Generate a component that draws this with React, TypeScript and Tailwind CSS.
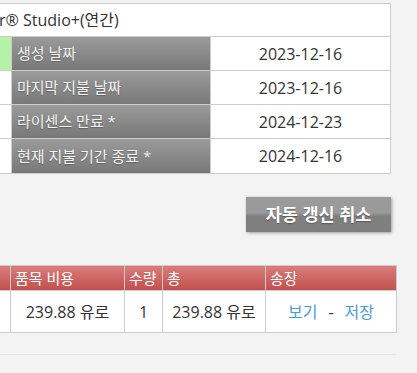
import React from "react";

const font = "font-['Open_Sans','Noto_Sans_CJK_KR',sans-serif]";

const dates = [
  { label: "생성 날짜", value: "2023-12-16", flag: true },
  { label: "마지막 지불 날짜", value: "2023-12-16", flag: false },
  { label: "라이센스 만료 *", value: "2024-12-23", flag: false },
  { label: "현재 지불 기간 종료 *", value: "2024-12-16", flag: false },
];

const grayCell =
  "bg-gradient-to-b from-[#9b9b9b] to-[#787878] text-[#f2f2f2] text-[15px] pl-[5px] flex items-center [text-shadow:0_1px_1px_rgba(0,0,0,0.25)]";

const redHead =
  "bg-gradient-to-b from-[#d87d7b] to-[#c1504e] text-white text-[15px] pl-[4px] flex items-center";

export default function App() {
  return (
    <div className={`${font} h-[373px] w-[417px] overflow-hidden bg-[#f3f3f3] text-[#333] pt-[3px]`}>
      {/* license details */}
      <div className="w-[391px] border-y border-r border-[#cccccc] bg-white">
        <div className="flex h-[33px] items-center border-b border-[#cccccc] -ml-[1px] text-[16px] whitespace-nowrap">
          r® Studio+(연간)
        </div>
        {dates.map((d, i) => (
          <div
            key={d.label}
            className={`grid h-[34px] grid-cols-[11px_1px_198px_1px_179px] ${i < dates.length - 1 ? "border-b border-[#cccccc]" : "h-[33px]"}`}
          >
            <div className={d.flag ? "bg-[#b4f3a6]" : "bg-white"} />
            <div className="bg-[#cccccc]" />
            <div className={grayCell}>{d.label}</div>
            <div className="bg-[#cccccc]" />
            <div className="flex items-center justify-center text-[16px]">{d.value}</div>
          </div>
        ))}
      </div>

      <div className="flex justify-end pr-[26px] pt-[23px]">
        <button className="h-[35px] w-[145px] bg-gradient-to-b from-[#9a9a9a] from-45% to-[#7f7f7f] to-55% text-[17.5px] font-bold text-white shadow-[1px_1px_3px_rgba(0,0,0,0.35)] [text-shadow:0_1px_1px_rgba(0,0,0,0.3)]">
          자동 갱신 취소
        </button>
      </div>

      {/* order table */}
      <div className="mt-[33px] w-[397px] border-y border-r border-[#cccccc] bg-white">
        <div className="grid h-[25px] grid-cols-[10px_1px_113px_1px_37px_1px_102px_1px_130px] border-b border-[#cccccc]">
          <div className={redHead} />
          <div className="bg-[#cccccc]" />
          <div className={redHead}>품목 비용</div>
          <div className="bg-[#cccccc]" />
          <div className={redHead}>수량</div>
          <div className="bg-[#cccccc]" />
          <div className={redHead}>총</div>
          <div className="bg-[#cccccc]" />
          <div className={redHead}>송장</div>
        </div>
        <div className="grid h-[41px] grid-cols-[10px_1px_113px_1px_37px_1px_102px_1px_130px] text-[16px]">
          <div />
          <div className="bg-[#cccccc]" />
          <div className="flex items-center justify-center">239.88 유로</div>
          <div className="bg-[#cccccc]" />
          <div className="flex items-center justify-center">1</div>
          <div className="bg-[#cccccc]" />
          <div className="flex items-center justify-center">239.88 유로</div>
          <div className="bg-[#cccccc]" />
          <div className="flex items-center justify-center gap-[11px]">
            <a className="text-[#4a9bd1]">보기</a>
            <span>-</span>
            <a className="text-[#4a9bd1]">저장</a>
          </div>
        </div>
      </div>

      <div className="mt-[21px] h-px w-[396px] bg-[#e6e6e6]" />
    </div>
  );
}
